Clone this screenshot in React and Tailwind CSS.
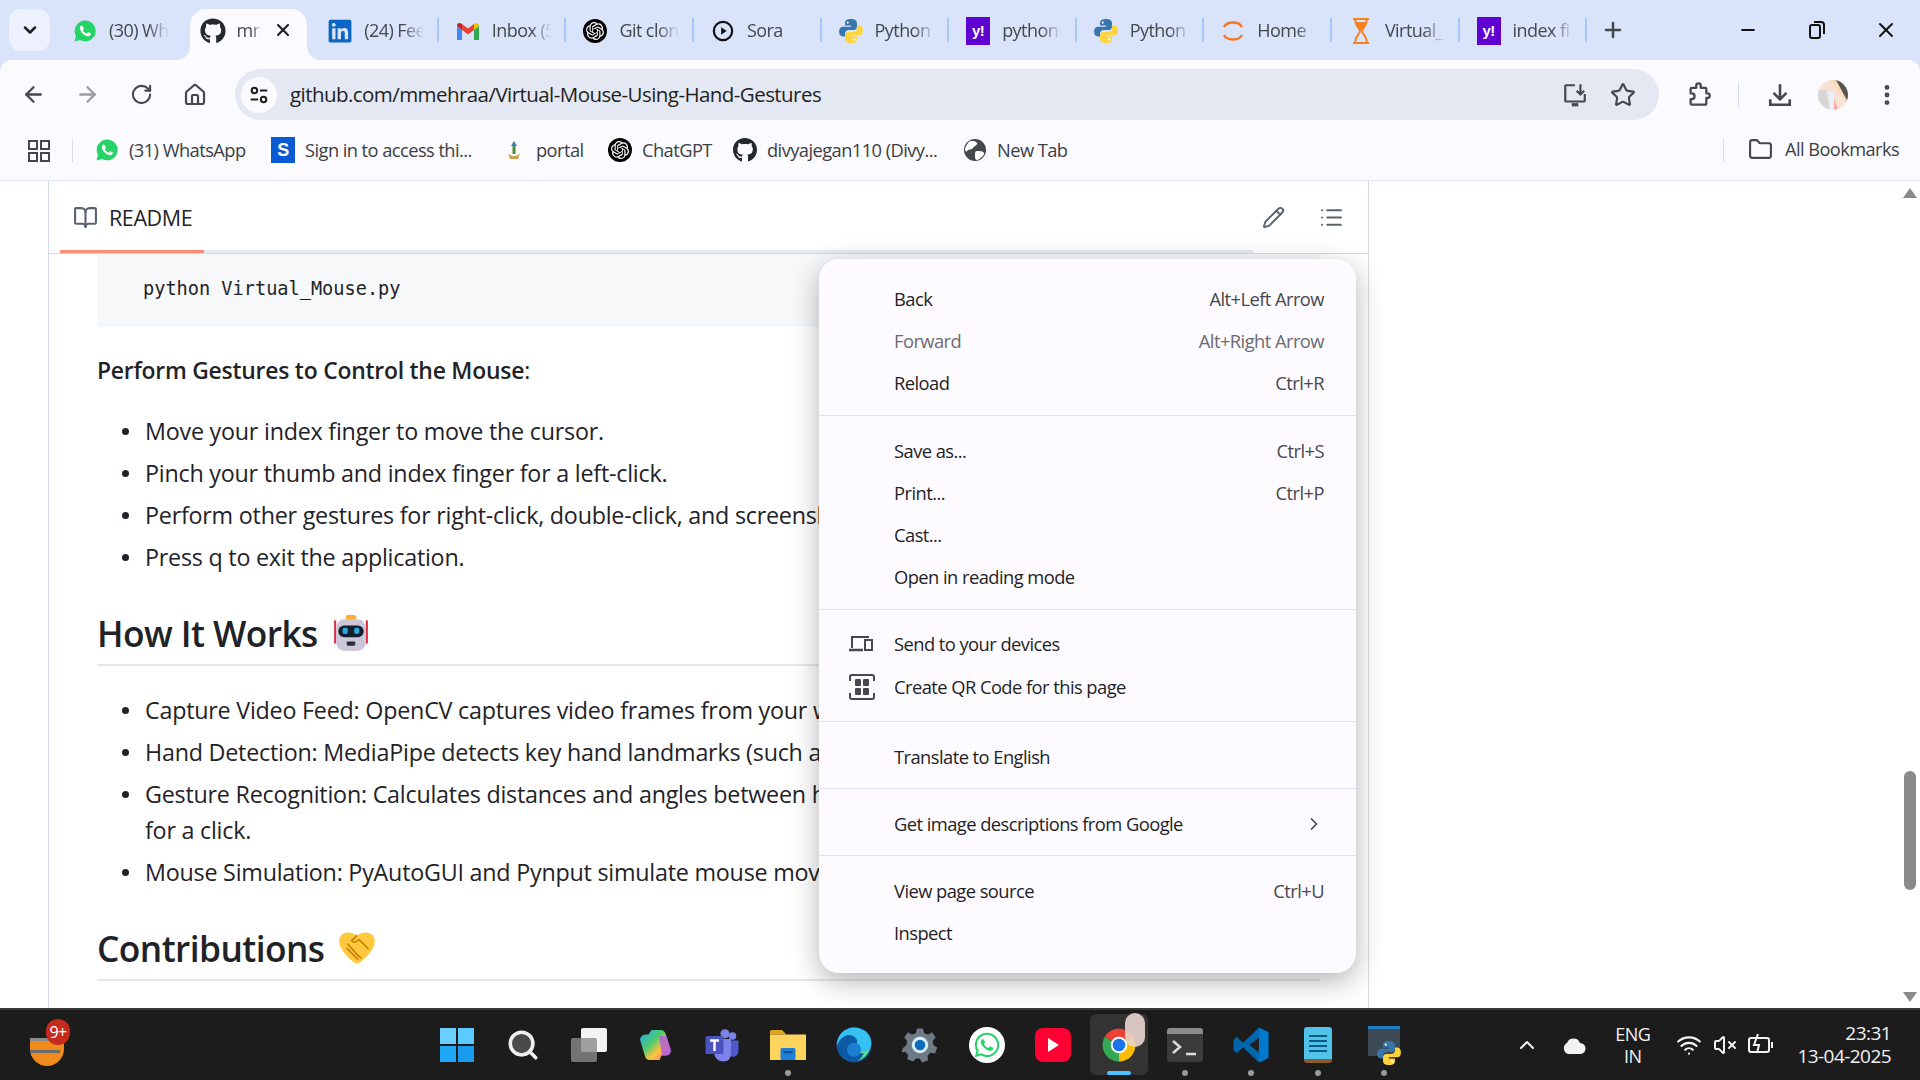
import React from 'react';
import { ArrowLeft, ArrowRight, RotateCw, House, Star, EllipsisVertical, Folder, Pencil, List, BookOpen, ChevronUp, Wifi, VolumeX, Plus, Minus, X, ChevronDown, ChevronRight, Search } from 'lucide-react';
import { FaWhatsapp, FaGithub, FaLinkedin } from 'react-icons/fa';
import { SiOpenai } from 'react-icons/si';

const Py = ({ s = 26 }) => (
  <svg width={s} height={s} viewBox="0 0 24 24">
    <path fill="#3776ab" d="M12 1C8 1 6.500 2.500 6.500 4.500V7h5.700v1H4.500C2.500 8 1 9.500 1 12.500S2.500 17 4.500 17h2v-2.700c0-2 1.500-3.300 3.500-3.300h4.500c1.700 0 3-1.300 3-3V4.500C17.500 2.500 15.500 1 12 1z" />
    <circle cx="9" cy="4.200" r="1" fill="#fff" />
    <g transform="rotate(180 12 12)">
      <path fill="#ffd43b" d="M12 1C8 1 6.500 2.500 6.500 4.500V7h5.700v1H4.500C2.500 8 1 9.500 1 12.500S2.500 17 4.500 17h2v-2.700c0-2 1.500-3.300 3.500-3.300h4.500c1.700 0 3-1.300 3-3V4.500C17.500 2.500 15.500 1 12 1z" />
      <circle cx="9" cy="4.200" r="1" fill="#fff" />
    </g>
  </svg>
);
const Wa = ({ s = 24 }) => (
  <svg width={s} height={s} viewBox="0 0 24 24">
    <path fill="#25d366" d="M12 1.500A10.400 10.400 0 0 0 3 17l-1.500 5.500L7.200 21A10.400 10.400 0 1 0 12 1.500z" />
    <path fill="#fff" d="M8.500 6.500c-.6 0-1.600.9-1.600 2.500 0 3.500 4.500 8.200 8.300 8.200 1.500 0 2.600-1 2.700-2.100 0-.4 0-.6-.3-.8l-2.200-1c-.3-.1-.5 0-.7.200l-.8 1c-.2.200-.4.200-.6.100-1.400-.6-2.700-1.700-3.400-3.100-.1-.2 0-.4.100-.5l.7-.9c.1-.2.100-.4 0-.6l-.9-2.200c-.1-.3-.3-.3-.5-.3z" />
  </svg>
);
const Yh = () => (
  <div className="w-[24px] h-[28px] bg-[#5f01d1] flex items-center justify-center text-white font-bold text-[15px] leading-none font-['Liberation_Sans',sans-serif]">y!</div>
);
const Li = () => <FaLinkedin size={26} color="#0a66c2" />;
const Gmail = () => (
  <svg width="24" height="24" viewBox="0 0 24 24">
    <path fill="#4285f4" d="M1 6.500V21h5V11z" />
    <path fill="#34a853" d="M23 6.500V21h-5V11z" />
    <path fill="#ea4335" d="M6 11V5l6 4.500L18 5v6l-6 4.500z" />
    <path fill="#c5221f" d="M1 6.500C1 4 4 3 6 5v6z" />
    <path fill="#fbbc04" d="M23 6.500C23 4 20 3 18 5v6z" />
  </svg>
);
const Oa = ({ s = 24 }) => (
  <div className="rounded-full bg-black flex items-center justify-center text-white" style={{ width: s, height: s }}><SiOpenai size={s - 6} /></div>
);
const Sora = () => (
  <svg width="22" height="22" viewBox="0 0 24 24"><circle cx="12" cy="12" r="10" fill="none" stroke="#111" strokeWidth="2.400" /><path d="M10 8l6 4-6 4z" fill="#111" /></svg>
);
const Home2 = () => (
  <svg width="24" height="26" viewBox="0 0 24 26" fill="none" stroke="#f37726" strokeWidth="2.400"><path d="M3 9C6 3 18 3 21 9" /><path d="M3 17C6 23 18 23 21 17" /></svg>
);
const Hour = () => (
  <svg width="24" height="28" viewBox="0 0 24 28" fill="none" stroke="#f58220" strokeWidth="2"><path d="M4 2h16M4 26h16" /><path d="M6 2c0 7 5 9 5 12s-5 5-5 12h12c0-7-5-9-5-12s5-5 5-12z" /><path d="M8 6h8l-4 6z" fill="#f58220" /></svg>
);

const tabs = [
  { t: '(30) WhatsApp', i: <Wa />, nosep: true },
  { t: 'mmehraa', i: <FaGithub size={26} color="#24292f" />, active: true },
  { t: '(24) Feed', i: <Li /> },
  { t: 'Inbox (5', i: <Gmail /> },
  { t: 'Git clone', i: <Oa /> },
  { t: 'Sora', i: <Sora /> },
  { t: 'Python', i: <Py /> },
  { t: 'python', i: <Yh /> },
  { t: 'Python', i: <Py /> },
  { t: 'Home', i: <Home2 /> },
  { t: 'Virtual_', i: <Hour /> },
  { t: 'index fi', i: <Yh /> },
];

const Tab = ({ t, i, active, nosep }) => (
  <div className="relative w-[127.6px] h-[60px] shrink-0">
    {active && (
      <>
        <div className="absolute left-[6px] right-[4px] top-[9px] bottom-0 bg-[#fbfaff] rounded-t-[16px]" />
        <svg className="absolute left-[-8px] bottom-0" width="14" height="14" viewBox="0 0 14 14"><path d="M0 14C8 14 14 8 14 0V14z" fill="#fbfaff" /></svg>
        <svg className="absolute right-[-10px] bottom-0" width="14" height="14" viewBox="0 0 14 14"><path d="M14 14C6 14 0 8 0 0V14z" fill="#fbfaff" /></svg>
      </>
    )}
    <div className="relative h-full flex items-center pt-[1px]">
      <div className="w-[28px] ml-[15px] flex justify-center shrink-0">{i}</div>
      <div className={`ml-[10px] overflow-hidden whitespace-nowrap text-[18px] text-[#44474d] [mask-image:linear-gradient(to_right,black_65%,transparent)] ${active ? 'w-[24px]' : 'w-[60px]'}`}>{t}</div>
      {active && <X size={20} strokeWidth={2.5} className="absolute left-[89px] top-[20px] text-[#1f1f1f]" />}
    </div>
    {!active && !nosep && <div className="absolute right-0 top-[18px] h-[24px] w-[2px] bg-[#a8c7fa]" />}
  </div>
);

const Sep = () => <div className="h-px bg-[#dfe3f3]" />;
const Row = ({ l, r, dim, icon, h = 'h-[42px]', chev }) => (
  <div className={`${h} relative flex items-center pl-[75px] pr-[32px] text-[18.35px] ${dim ? 'text-[#6b6b70]' : 'text-[#1f1f1f]'}`}>
    {icon && <div className="absolute left-[30px] top-0 bottom-0 flex items-center">{icon}</div>}
    <span>{l}</span>
    {r && <span className={`ml-auto ${dim ? 'text-[#6b6b70]' : 'text-[#47474c]'}`}>{r}</span>}
    {chev && <ChevronRight size={20} className="ml-auto text-[#47474c]" />}
  </div>
);

const Bm = ({ w, i, t }) => (
  <div className="flex items-center gap-[10px] shrink-0 whitespace-nowrap text-[18.3px] text-[#3c4043]" style={{ width: w }}>
    <div className="w-[24px] flex justify-center">{i}</div><span>{t}</span>
  </div>
);

const Li2 = ({ children }) => (
  <li className="h-[42px] flex items-center whitespace-nowrap pl-[48px] relative">
    <span className="absolute left-[25px] top-[18px] w-[7px] h-[7px] rounded-full bg-[#1f2328]" />
    {children}
  </li>
);

const Robot = () => (
  <svg width="38" height="38" viewBox="0 0 36 36">
    <rect x="2" y="6" width="2" height="22" fill="#dd2e44" /><rect x="32" y="6" width="2" height="22" fill="#dd2e44" />
    <rect x="13" y="1" width="10" height="5" rx="2" fill="#ffac33" />
    <rect x="4" y="5" width="28" height="30" rx="8" fill="#ccc6d8" />
    <rect x="6" y="11" width="24" height="11" rx="5.500" fill="#14202b" />
    <rect x="10" y="13" width="5" height="6" rx="2" fill="#2aa8e0" /><rect x="21" y="13" width="5" height="6" rx="2" fill="#2aa8e0" />
    <rect x="14" y="26" width="8" height="4" rx="1" fill="#292f33" />
  </svg>
);
const Shake = () => (
  <svg width="38" height="38" viewBox="0 0 36 36">
    <path fill="#ffc83d" d="M3 6c4-4 10-3 15 0 5-3 11-4 15 0 3 4 2 10-1 14-3 5-9 11-14 13C13 31 7 25 4 20 1 16 0 10 3 6z" />
    <path fill="none" stroke="#c67c00" strokeWidth="1.500" d="M9 14l9 10 4 4M12 22l7 7M8 18l7 7M18 6l-5 5c2 3 5 1 7-1l9 9" />
  </svg>
);

const Tune = () => (
  <svg width="22" height="22" viewBox="0 0 24 24" fill="none" stroke="#1f1f1f" strokeWidth="2.200"><circle cx="7" cy="7" r="3" /><path d="M13 7h8M3 17h8" /><circle cx="17" cy="17" r="3" /></svg>
);
const Install = () => (
  <svg width="26" height="26" viewBox="0 0 24 24" fill="none" stroke="#44474d" strokeWidth="2"><path d="M12 3H4a1 1 0 0 0-1 1v13a1 1 0 0 0 1 1h16a1 1 0 0 0 1-1v-6" /><path d="M17 2v9M13.500 8l3.500 3.500L20.500 8" /><path d="M9 21h6" strokeWidth="3" /></svg>
);
const Ext = () => (
  <svg width="27" height="27" viewBox="0 0 24 24" fill="none" stroke="#44474d" strokeWidth="2" strokeLinejoin="round"><path d="M6 6h4V4a2 2 0 0 1 4 0v2h4a1 1 0 0 1 1 1v4h1a2 2 0 0 1 0 4h-1v5a1 1 0 0 1-1 1H6a1 1 0 0 1-1-1v-4h1a2.500 2.500 0 0 0 0-5H5V7a1 1 0 0 1 1-1z" /></svg>
);
const Dl = () => (
  <svg width="26" height="26" viewBox="0 0 24 24" fill="none" stroke="#44474d" strokeWidth="2.400"><path d="M12 2v13M6 10l6 6 6-6" /><path d="M3 16v5h18v-5" /></svg>
);
const Avatar = () => (
  <svg width="30" height="30" viewBox="0 0 30 30" className="rounded-full">
    <rect width="30" height="30" fill="#f8e2d4" />
    <path d="M0 10h8l4 20H0z" fill="#d6d6d6" />
    <path d="M15 0h15v24z" fill="#555" />
    <path d="M12 0h6l12 22v2z" fill="#fcd9b8" />
    <path d="M16 18l4 12h-6z" fill="#f6a7a0" />
    <path d="M10 12h6v18h-4z" fill="#e8f0fa" />
  </svg>
);
const Restore = () => (
  <svg width="18" height="20" viewBox="0 0 18 20" fill="none" stroke="#111" strokeWidth="2"><rect x="2" y="5" width="10" height="13" rx="2" /><path d="M6 2h7a3 3 0 0 1 3 3v9" /></svg>
);
const Apps = () => (
  <svg width="24" height="24" viewBox="0 0 24 24" fill="none" stroke="#44474d" strokeWidth="2"><rect x="2" y="3" width="8" height="8" /><rect x="14" y="3" width="8" height="8" /><rect x="2" y="15" width="8" height="8" /><rect x="14" y="15" width="8" height="8" /></svg>
);
const Globe = () => (
  <svg width="24" height="24" viewBox="0 0 24 24"><circle cx="12" cy="12" r="11" fill="#44474d" /><path fill="#fff" d="M7 3c3 0 6 0 7 2s-3 3-4 5-5 1-6 3-2-1-2-2 3-7 5-8zM14 13c3 0 6 0 7 2s-5 7-7 7-2-3-2-5 0-4 2-4z" /></svg>
);
const Portal = () => (
  <svg width="20" height="24" viewBox="0 0 20 24"><path d="M10 3l3 5h-6z" fill="#3a7bbf" /><path d="M10 8v8" stroke="#4a8f3c" strokeWidth="3" /><path d="M4 15c2 4 10 4 12 0l-2 6H6z" fill="#c9a24a" /></svg>
);

const Win = () => (
  <div className="grid grid-cols-2 gap-[2px] w-[34px] h-[34px]">
    <div className="bg-[#6bd0ff]" /><div className="bg-[#5ccaff]" /><div className="bg-[#1fa8f5]" /><div className="bg-[#189cf0]" />
  </div>
);
const TaskView = () => (
  <div className="relative w-[36px] h-[34px]">
    <div className="absolute right-0 top-0 w-[26px] h-[24px] bg-[#f4f4f4] rounded-[2px]" />
    <div className="absolute left-0 bottom-0 w-[26px] h-[24px] bg-[#8a8a8a]/80 rounded-[2px]" />
  </div>
);
const Copilot = () => (
  <svg width="36" height="36" viewBox="0 0 24 24">
    <defs><linearGradient id="cg" x1="0" y1="0" x2="1" y2="1"><stop offset="0" stopColor="#22a7f0" /><stop offset="0.4" stopColor="#4ecb71" /><stop offset="0.65" stopColor="#ffc53d" /><stop offset="1" stopColor="#f3609c" /></linearGradient></defs>
    <path fill="url(#cg)" d="M9 2h6c2 0 3 1 3.500 3l3 10c.5 2-1 4-3 4h-3l-1 3H8c-2 0-3-1-3.500-3l-3-10C1 7 3 5 5 5h2z" />
    <path fill="#b05be0" d="M14 6h5l3 9c.5 2-1 4-3 4h-3z" opacity="0.8" />
  </svg>
);
const Teams = () => (
  <svg width="36" height="36" viewBox="0 0 24 24">
    <circle cx="19" cy="6" r="2.500" fill="#7b83eb" /><circle cx="14" cy="4.500" r="3" fill="#7b83eb" />
    <path fill="#5059c9" d="M16 9h7v7c0 2-2 4-3.500 4S16 18 16 16z" />
    <path fill="#7b83eb" d="M7 8h11v10c0 3-2 5-5 5s-6-2-6-5z" />
    <rect x="1" y="6" width="12" height="12" rx="1" fill="#4b53bc" />
    <path d="M4 9h6M7 9v7" stroke="#fff" strokeWidth="1.600" />
  </svg>
);
const Files = () => (
  <svg width="36" height="36" viewBox="0 0 24 24">
    <path fill="#e0a419" d="M0 3a1 1 0 0 1 1-1h7l3 3H0z" />
    <path fill="#ffd45c" d="M0 5h24v17H0z" />
    <rect x="7" y="14" width="10" height="8" rx="1" fill="#1e7fd6" /><rect x="9" y="16" width="6" height="1.500" fill="#0d4f94" />
  </svg>
);
const Edge = () => (
  <svg width="38" height="38" viewBox="0 0 24 24">
    <circle cx="12" cy="12" r="11" fill="#0c59a4" />
    <path fill="#35c1f1" d="M12 1c6 0 11 4 11 10 0 3-2 5-5 5s-5-1-5-3c0-1 1-2 1-3 0-3-4-5-7-4-3 1-5 4-6 7C1 6 6 1 12 1z" />
    <path fill="#5ee08c" d="M13 13c0 2 2 3 5 3 2 0 3-1 4.500-2.500C21 18 17 22 13 22c2 0 5-3 5-5-2 1-5-1-5-4z" />
    <circle cx="12" cy="15" r="4.500" fill="#1b7fd1" />
  </svg>
);
const Gear = () => (
  <svg width="36" height="36" viewBox="0 0 24 24">
    <path fill="#6e7a86" d="M10 1h4l.7 3 2.600 1.100L20 3.500 22.500 7l-2 2.200.4 2.800 2.600 1.600-1.500 4-3-.5-2 2 .4 3-4 1.500-1.600-2.600h-2.600L7.600 23l-4-1.500.4-3-2-2-3 .5L1 13.600 3 12l.4-2.800L1.500 7 4 3.500l2.700 1.600L9.300 4z" />
    <circle cx="12" cy="12" r="5.500" fill="#d8ecfa" /><circle cx="12" cy="12" r="3.500" fill="#0f6cbd" />
  </svg>
);
const WaBig = () => (
  <div className="w-[36px] h-[36px] rounded-full bg-white flex items-center justify-center"><FaWhatsapp size={28} color="#25d366" /></div>
);
const Yt = () => (
  <div className="w-[36px] h-[34px] rounded-[8px] bg-[#ff0033] flex items-center justify-center">
    <svg width="14" height="16" viewBox="0 0 14 16"><path d="M2 1l11 7-11 7z" fill="#fff" /></svg>
  </div>
);
const Chrome = () => (
  <div className="relative">
    <svg width="36" height="36" viewBox="0 0 24 24">
      <path fill="#ea4335" d="M12 12L2.500 6.500A11 11 0 0 1 21.500 6.500z" />
      <path fill="#34a853" d="M12 12L2.500 6.500A11 11 0 0 0 12 23z" />
      <path fill="#fbbc04" d="M12 12L21.500 6.500A11 11 0 0 1 12 23z" />
      <circle cx="12" cy="12" r="5.500" fill="#fff" /><circle cx="12" cy="12" r="4.200" fill="#1a73e8" />
    </svg>
    <div className="absolute right-[-8px] top-[-14px] w-[20px] h-[34px] rounded-full bg-[#e8d5cd]/90" />
  </div>
);
const Term = () => (
  <div className="w-[36px] h-[34px] rounded-[3px] bg-[#3b3b3b] overflow-hidden">
    <div className="h-[6px] bg-[#8b8b8b]" />
    <svg width="36" height="28" viewBox="0 0 36 28" fill="none" stroke="#ddd" strokeWidth="2.500"><path d="M6 7l7 6-7 6M19 20h10" /></svg>
  </div>
);
const Vs = () => (
  <svg width="38" height="38" viewBox="0 0 24 24">
    <path fill="#0065a9" d="M17 1l6 3v16l-6 3L7 13.500 3 17l-2-1.500v-7L3 7l4 3.500z" />
    <path fill="#007acc" d="M17 1l6 3v16l-6 3z" />
    <path fill="#1f1f1f" d="M17 7.500l-6 4.500 6 4.500z" />
  </svg>
);
const Notepad = () => (
  <div className="w-[28px] h-[36px] rounded-[3px] bg-[#4fc3e8] flex flex-col items-center justify-center gap-[3px] border-b-[4px] border-[#8a5a2b]">
    <div className="w-[18px] h-[2px] bg-[#0d5a85]" /><div className="w-[18px] h-[2px] bg-[#0d5a85]" /><div className="w-[18px] h-[2px] bg-[#0d5a85]" /><div className="w-[18px] h-[2px] bg-[#0d5a85]" />
  </div>
);
const PyIdle = () => (
  <div className="relative w-[36px] h-[38px]">
    <div className="absolute left-[2px] top-0 w-[32px] h-[30px] bg-[#3e4a55] border-t-[3px] border-[#1f7fc4]" />
    <div className="absolute left-[10px] bottom-[-2px]"><Py s={26} /></div>
  </div>
);

const taskIcons = [
  { i: <Win /> }, { i: <Search size={34} color="#f0f0f0" strokeWidth={2.500} fill="#4a4a4a" /> }, { i: <TaskView /> }, { i: <Copilot /> }, { i: <Teams /> },
  { i: <Files />, dot: true }, { i: <Edge /> }, { i: <Gear /> }, { i: <WaBig /> }, { i: <Yt /> }, { i: <Chrome />, active: true },
  { i: <Term />, dot: true }, { i: <Vs />, dot: true }, { i: <Notepad />, dot: true }, { i: <PyIdle />, dot: true },
];

const H2 = ({ children }) => (
  <div className="mt-[24px] h-[64px] border-b-2 border-[#e4e7ec] flex items-center gap-[14px] text-[35.3px] font-semibold tracking-[-0.56px]">{children}</div>
);

export default function App() {
  return (
    <div className="relative w-[1920px] h-[1080px] overflow-hidden flex flex-col bg-white font-['Open_Sans','Noto_Sans',sans-serif] tracking-[-0.56px]">
      {/* tab strip */}
      <div className="h-[60px] shrink-0 bg-[#d9e3f9] flex items-start">
        <div className="ml-[9px] mt-[9px] w-[41px] h-[42px] rounded-[12px] bg-[#ecf1fd] flex items-center justify-center shrink-0">
          <ChevronDown size={20} strokeWidth={3} className="text-[#1f1f1f]" />
        </div>
        <div className="ml-[6px] flex">
          {tabs.map((x, n) => <Tab key={n} {...x} />)}
        </div>
        <div className="ml-[9px] w-[34px] h-[60px] flex items-center justify-center shrink-0"><Plus size={24} strokeWidth={2.500} className="text-[#44474d]" /></div>
        <div className="ml-auto flex h-[60px] items-center">
          <div className="w-[69px] flex justify-center"><Minus size={20} strokeWidth={2.500} className="text-[#111]" /></div>
          <div className="w-[69px] flex justify-center"><Restore /></div>
          <div className="w-[69px] flex justify-center"><X size={24} strokeWidth={2} className="text-[#111]" /></div>
        </div>
      </div>

      {/* toolbar */}
      <div className="h-[60px] shrink-0 bg-[#d9e3f9]">
        <div className="h-full bg-[#fbfaff] rounded-t-[12px] flex items-start pt-[9px] pl-[6px] text-[#44474d]">
          <div className="w-[54px] h-[51px] flex items-center justify-center"><ArrowLeft size={25} strokeWidth={2.200} /></div>
          <div className="w-[54px] h-[51px] flex items-center justify-center"><ArrowRight size={25} strokeWidth={2.200} className="text-[#9a9ca3]" /></div>
          <div className="w-[54px] h-[51px] flex items-center justify-center"><RotateCw size={23} strokeWidth={2.200} /></div>
          <div className="w-[54px] h-[51px] flex items-center justify-center"><House size={24} strokeWidth={2.200} /></div>
          <div className="ml-[13px] w-[1424px] h-[51px] rounded-full bg-[#e4e8f3] flex items-center pl-[6px] pr-[12px]">
            <div className="w-[36px] h-[36px] rounded-full bg-[#fbfaff] flex items-center justify-center"><Tune /></div>
            <div className="ml-[13px] text-[20.500px] text-[#1f1f1f] whitespace-nowrap">github.com/mmehraa/Virtual-Mouse-Using-Hand-Gestures</div>
            <div className="ml-auto w-[48px] flex justify-center"><Install /></div>
            <div className="w-[48px] flex justify-center"><Star size={26} strokeWidth={2} /></div>
          </div>
          <div className="ml-[16px] w-[46px] h-[51px] flex items-center justify-center"><Ext /></div>
          <div className="ml-[17px] mt-[13px] w-px h-[25px] bg-[#d5dff5]" />
          <div className="ml-[18px] w-[46px] h-[51px] flex items-center justify-center"><Dl /></div>
          <div className="ml-[15px] w-[30px] h-[51px] flex items-center justify-center"><Avatar /></div>
          <div className="ml-[24px] w-[30px] h-[51px] flex items-center justify-center"><EllipsisVertical size={26} strokeWidth={2.500} /></div>
        </div>
      </div>

      {/* bookmarks */}
      <div className="h-[61px] shrink-0 bg-[#fbfaff] border-b border-[#e2e6f3] flex items-center">
        <div className="ml-[27px] w-[24px] flex justify-center"><Apps /></div>
        <div className="ml-[21px] w-px h-[24px] bg-[#d5dff5]" />
        <div className="ml-[22px] flex items-center">
          <Bm w={176} i={<Wa />} t="(31) WhatsApp" />
          <Bm w={231} i={<div className="w-[24px] h-[26px] bg-[#0a5bd3] text-white font-bold text-[18px] leading-[26px] text-center font-['Liberation_Sans',sans-serif]">S</div>} t="Sign in to access thi..." />
          <Bm w={106} i={<Portal />} t="portal" />
          <Bm w={125} i={<Oa />} t="ChatGPT" />
          <Bm w={230} i={<FaGithub size={26} color="#24292f" />} t="divyajegan110 (Divy..." />
          <Bm w={120} i={<Globe />} t="New Tab" />
        </div>
        <div className="ml-auto flex items-center pr-[21px]">
          <div className="w-px h-[24px] bg-[#d5dff5]" />
          <Folder size={25} strokeWidth={2} className="ml-[24px] text-[#44474d]" />
          <span className="ml-[12px] text-[18.2px] text-[#3c4043] whitespace-nowrap">All Bookmarks</span>
        </div>
      </div>

      {/* page */}
      <div className="flex-1 flex min-h-0 bg-white">
        <div className="ml-[48px] w-[1321px] border-x border-[#d5dbe8] overflow-hidden text-[#1f2328] text-[23.3px] tracking-[-0.23px] shrink-0">
          <div className="h-[73px] relative flex items-center border-b-[1px] border-[#d5dbe8]">
            <div className="absolute left-[11px] right-[115px] bottom-0 h-[3px] bg-[#e6eaef]" />
            <div className="absolute left-[11px] bottom-0 w-[144px] h-[3px] bg-[#fd8c73]" />
            <BookOpen size={25} strokeWidth={2} className="ml-[24px] text-[#59636e]" />
            <span className="ml-[11px] pt-[2px] text-[21.5px] font-medium tracking-[-0.4px]">README</span>
            <Pencil size={23} strokeWidth={2} className="ml-auto text-[#59636e]" />
            <List size={25} strokeWidth={2} className="ml-[34px] mr-[24px] text-[#59636e]" />
          </div>
          <div className="mx-[48px] flex flex-col">
            <div className="h-[73px] pb-[4px] bg-[#f6f8fa] flex items-center pl-[46px] font-['DejaVu_Sans_Mono',monospace] text-[18.600px] tracking-normal">python Virtual_Mouse.py</div>
            <p className="mt-[24px] h-[40px] flex items-center whitespace-pre text-[22.9px]"><b className="font-semibold">Perform Gestures to Control the Mouse</b>:</p>
            <ul className="mt-[19px]">
              <Li2>Move your index finger to move the cursor.</Li2>
              <Li2>Pinch your thumb and index finger for a left-click.</Li2>
              <Li2>Perform other gestures for right-click, double-click, and screenshots.</Li2>
              <Li2>Press q to exit the application.</Li2>
            </ul>
            <H2>How It Works <Robot /></H2>
            <ul className="mt-[23px]">
              <Li2>Capture Video Feed: OpenCV captures video frames from your webcam.</Li2>
              <Li2>Hand Detection: MediaPipe detects key hand landmarks (such as fingertips).</Li2>
              <Li2>Gesture Recognition: Calculates distances and angles between hand landmarks to detect</Li2>
              <li className="h-[30px] flex items-center pl-[48px] whitespace-nowrap mb-[6px]">for a click.</li>
              <Li2>Mouse Simulation: PyAutoGUI and Pynput simulate mouse movements and clicks.</Li2>
            </ul>
            <H2>Contributions <Shake /></H2>
          </div>
        </div>
        <div className="flex-1" />
        <div className="w-[20px] h-full relative flex flex-col items-center bg-white">
          <svg className="mt-[7px]" width="14" height="10" viewBox="0 0 14 10"><path d="M7 0l7 10H0z" fill="#8a8a8a" /></svg>
          <div className="mt-[573px] w-[12px] h-[119px] rounded-full bg-[#8a8a8a]" />
          <svg className="mt-auto mb-[6px]" width="14" height="10" viewBox="0 0 14 10"><path d="M7 10l7-10H0z" fill="#8a8a8a" /></svg>
        </div>
      </div>

      {/* taskbar */}
      <div className="h-[72px] shrink-0 bg-[#1c1c1c] border-t-[2px] border-[#3a3a3a] flex items-center text-[#f2f2f2]">
        <div className="relative ml-[30px] w-[36px] h-[40px] mt-[2px]">
          <div className="absolute left-0 bottom-0 w-[34px] h-[26px] rounded-b-full bg-[#f08a1d]" />
          <div className="absolute left-0 top-[12px] w-[30px] h-[3px] bg-[#8a8a8a]" />
          <div className="absolute left-0 top-[24px] w-[30px] h-[3px] bg-[#6a6a6a]" />
          <div className="absolute left-[16px] top-[-7px] w-[24px] h-[26px] rounded-full bg-[#c42b1c] flex items-center justify-center text-[16px] leading-none text-white">9+</div>
        </div>
        <div className="ml-[358px] flex h-full items-center">
          {taskIcons.map((x, n) => (
            <div key={n} className="relative w-[66.200px] h-[70px] flex items-center justify-center">
              {x.active && <div className="absolute left-[4px] right-[4px] top-[4px] bottom-[5px] rounded-[6px] bg-[#333333]" />}
              <div className="relative">{x.i}</div>
              {x.dot && <div className="absolute bottom-[4px] left-1/2 -translate-x-1/2 w-[6px] h-[6px] rounded-full bg-[#9a9a9a]" />}
              {x.active && <div className="absolute bottom-[5px] left-1/2 -translate-x-1/2 w-[24px] h-[4px] rounded-full bg-[#4cc2ff]" />}
            </div>
          ))}
        </div>
        <div className="ml-[98px] flex items-center">
          <ChevronUp size={24} strokeWidth={2} />
          <svg className="ml-[22px]" width="26" height="22" viewBox="0 0 26 22"><path d="M7 20a6 6 0 0 1-1-11 7 7 0 0 1 13 0 5.500 5.500 0 0 1 0 11z" fill="#f2f2f2" /></svg>
          <div className="ml-[18px] w-[56px] text-center text-[18px] leading-[22px]"><div>ENG</div><div>IN</div></div>
          <Wifi size={26} className="ml-[15px]" />
          <VolumeX size={24} className="ml-[11px]" />
          <svg className="ml-[10px]" width="28" height="26" viewBox="0 0 28 26" fill="none" stroke="#f2f2f2" strokeWidth="2"><rect x="2" y="6" width="20" height="14" rx="2" /><path d="M25 10v6" /><path d="M11 2L7 13h5l-2 8" /></svg>
        </div>
        <div className="ml-auto mr-[29px] text-right text-[19px] leading-[23px]"><div>23:31</div><div>13-04-2025</div></div>
      </div>

      {/* context menu */}
      <div className="absolute left-[819px] top-[259px] w-[537px] h-[714px] rounded-[20px] bg-[#fdfbff] shadow-[0_8px_28px_rgba(0,0,0,0.3)] pt-[19px]">
        <Row l="Back" r="Alt+Left Arrow" />
        <Row l="Forward" r="Alt+Right Arrow" dim />
        <Row l="Reload" r="Ctrl+R" />
        <div className="mt-[11px] mb-[14px]"><Sep /></div>
        <Row l="Save as..." r="Ctrl+S" />
        <Row l="Print..." r="Ctrl+P" />
        <Row l="Cast..." />
        <Row l="Open in reading mode" />
        <div className="mt-[11px] mb-[12px]"><Sep /></div>
        <Row h="h-[43px]" l="Send to your devices" icon={
          <svg width="24" height="20" viewBox="0 0 24 20" fill="none" stroke="#47474c" strokeWidth="2"><path d="M3 14V3h17" /><path d="M0 16h14" strokeWidth="2.500" /><rect x="16" y="6" width="7" height="10" /></svg>
        } />
        <Row h="h-[43px]" l="Create QR Code for this page" icon={
          <svg width="26" height="26" viewBox="0 0 26 26" fill="none" stroke="#47474c" strokeWidth="2"><path d="M1 7V3a2 2 0 0 1 2-2h20a2 2 0 0 1 2 2v4M1 19v4a2 2 0 0 0 2 2h20a2 2 0 0 0 2-2v-4" /><g fill="#47474c" stroke="none"><rect x="6" y="5" width="6" height="7" rx="1" /><rect x="14" y="5" width="6" height="7" rx="1" /><rect x="6" y="14" width="6" height="7" rx="1" /><rect x="14" y="14" width="6" height="7" rx="1" /></g></svg>
        } />
        <div className="mt-[13px] mb-[14px]"><Sep /></div>
        <Row l="Translate to English" />
        <div className="mt-[10px] mb-[14px]"><Sep /></div>
        <Row l="Get image descriptions from Google" chev />
        <div className="mt-[10px] mb-[14px]"><Sep /></div>
        <Row l="View page source" r="Ctrl+U" />
        <Row l="Inspect" />
      </div>
    </div>
  );
}
